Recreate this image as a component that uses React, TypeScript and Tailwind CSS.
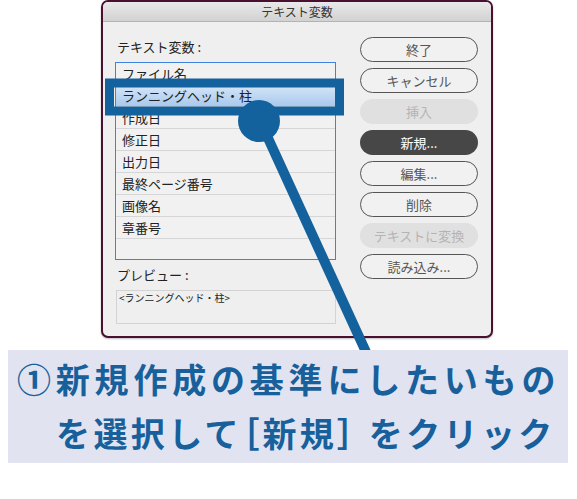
import React from "react";

const items = [
  "ファイル名",
  "ランニングヘッド・柱",
  "作成日",
  "修正日",
  "出力日",
  "最終ページ番号",
  "画像名",
  "章番号",
];

type Btn = { label: string; kind: "normal" | "disabled" | "primary" };
const buttons: Btn[] = [
  { label: "終了", kind: "normal" },
  { label: "キャンセル", kind: "normal" },
  { label: "挿入", kind: "disabled" },
  { label: "新規...", kind: "primary" },
  { label: "編集...", kind: "normal" },
  { label: "削除", kind: "normal" },
  { label: "テキストに変換", kind: "disabled" },
  { label: "読み込み...", kind: "normal" },
];

export default function App() {
  return (
    <div
      className="relative w-[577px] h-[499px] bg-white overflow-hidden"
      style={{ fontFamily: '"Noto Sans CJK JP", "Noto Sans", sans-serif' }}
    >
      {/* Dialog */}
      <div className="ml-[101px] w-[392px] h-[338px] border-2 border-[#4a1030] rounded-[7px] bg-[#efefef] overflow-hidden flex flex-col shadow-[0_1px_2px_rgba(0,0,0,0.25)]">
        <div className="h-[20px] shrink-0 bg-gradient-to-b from-[#e9e9e9] to-[#d2d2d2] border-b border-[#b3b3b3] flex items-center justify-center text-[12px] leading-none text-[#333]">
          テキスト変数
        </div>
        <div className="flex pl-[12px] pr-[13px]">
          <div className="w-[221px] flex flex-col">
            <div className="mt-[17px] h-[16px] leading-[16px] text-[13px] text-[#222] pl-[2px]">
              テキスト変数 :
            </div>
            <div className="mt-[7px] h-[198px] border border-[#3f82e0] bg-[#f1f1f1] flex flex-col">
              {items.map((it, i) => (
                <div
                  key={it}
                  className={
                    i === 1
                      ? "h-[22px] shrink-0 border-b border-[#d6d6d6] flex items-center pl-[6px] text-[13px] text-[#222] bg-gradient-to-b from-[#d6e6f7] to-[#a9c9ee]"
                      : "h-[22px] shrink-0 border-b border-[#d6d6d6] flex items-center pl-[6px] text-[13px] text-[#222]"
                  }
                >
                  {it}
                </div>
              ))}
            </div>
            <div className="mt-[7px] h-[16px] leading-[16px] text-[13px] text-[#222] pl-[2px]">
              プレビュー :
            </div>
            <div className="mt-[7px] ml-[1px] h-[34px] w-[220px] border border-[#d3d3d3] bg-[#efefef] px-[2px] pt-[1px] text-[10px] leading-[12px] text-[#222]">
              &lt;ランニングヘッド・柱&gt;
            </div>
          </div>
          <div className="ml-[24px] w-[118px] pt-[15px] flex flex-col gap-[6px]">
            {buttons.map((b) => (
              <div
                key={b.label}
                className={
                  b.kind === "primary"
                    ? "h-[25px] rounded-full bg-[#474747] text-white flex items-center justify-center text-[13px]"
                    : b.kind === "disabled"
                    ? "h-[25px] rounded-full bg-[#e0e0e0] text-[#b4b4b4] flex items-center justify-center text-[13px]"
                    : "h-[25px] rounded-full border-[1.5px] border-[#555] bg-[#f1f1f1] text-[#555] flex items-center justify-center text-[13px]"
                }
              >
                {b.label}
              </div>
            ))}
          </div>
        </div>
      </div>

      {/* Annotation overlay */}
      <svg
        className="absolute left-0 top-0 pointer-events-none"
        width="577"
        height="499"
        viewBox="0 0 577 499"
      >
        <rect x="109.5" y="83" width="230" height="28" fill="none" stroke="#13629d" strokeWidth="9" />
        <line x1="262" y1="125" x2="366" y2="352" stroke="#13629d" strokeWidth="10" />
        <circle cx="259" cy="121" r="21" fill="#13629d" />
      </svg>

      {/* Caption */}
      <div className="relative mt-[12px] ml-[8px] w-[560px] h-[113px] bg-[#e1e4f0] text-[#17609c] font-bold text-[34px] leading-[54px] pt-[2px]">
        <div className="pl-[9px] whitespace-nowrap tracking-[4.8px]">①新規作成の基準にしたいもの</div>
        <div className="pl-[48px] whitespace-nowrap tracking-[3.4px]">
          を選択して<span className="[font-feature-settings:'palt']">［</span>新規<span className="[font-feature-settings:'palt']">］</span> をクリック
        </div>
      </div>
    </div>
  );
}
